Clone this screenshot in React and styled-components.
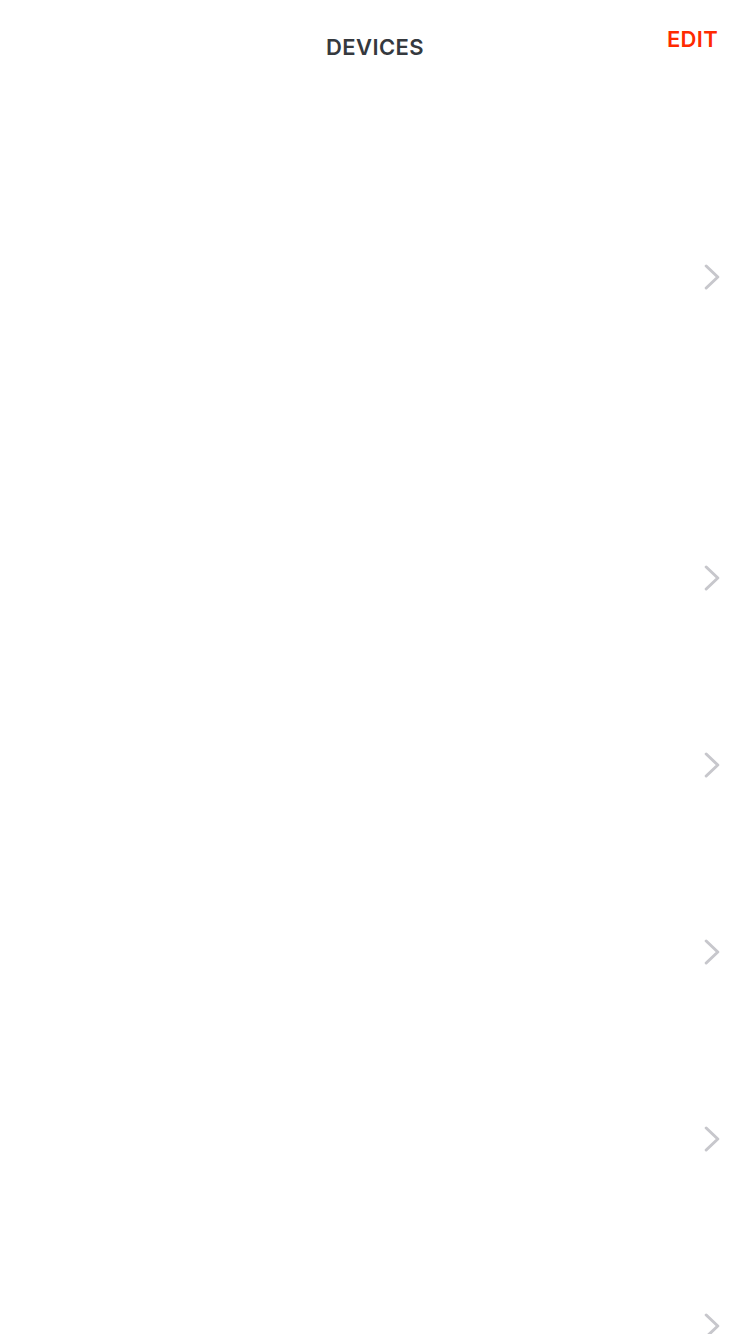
import React from 'react';
import styled, { createGlobalStyle } from 'styled-components';

const GlobalStyle = createGlobalStyle`
  html, body {
    margin: 0;
    padding: 0;
    background: #ffffff;
    font-family: Inter, "Noto Sans", "Liberation Sans", sans-serif;
  }
`;

const Page = styled.div`
  width: 750px;
  height: 1334px;
  overflow: hidden;
  background: #ffffff;
`;

const Header = styled.header`
  display: grid;
  grid-template-columns: 1fr auto 1fr;
  height: 90px;
  padding-top: 28px;
  box-sizing: border-box;
`;

const Title = styled.h1`
  grid-column: 2;
  margin: 8px 0 0;
  font-size: 22px;
  line-height: 22px;
  font-weight: 600;
  letter-spacing: 0.4px;
  color: #35393e;
`;

const EditButton = styled.button`
  grid-column: 3;
  justify-self: end;
  align-self: start;
  margin: 0 32px 0 0;
  padding: 0;
  border: none;
  background: none;
  font-family: inherit;
  font-size: 22px;
  line-height: 22px;
  font-weight: 600;
  letter-spacing: 0.3px;
  color: #ff2a00;
`;

const List = styled.div`
  display: flex;
  flex-direction: column;
`;

const Row = styled.div`
  display: flex;
  align-items: center;
  justify-content: flex-end;
  height: ${p => (p.$tall ? '374px' : '187px')};
  margin-bottom: ${p => (p.$tall ? '20px' : '0')};
  padding-right: 30px;
  flex: none;
`;

const Chevron = () => (
  <svg width="16" height="26" viewBox="0 0 16 26" fill="none">
    <path
      d="M2.2 2 L13.8 13 L2.2 24"
      stroke="#c7c7cc"
      strokeWidth="3"
      strokeLinecap="round"
      strokeLinejoin="round"
    />
  </svg>
);

const devices = [
  { id: 'hub', tall: true },
  { id: 'd1' },
  { id: 'd2' },
  { id: 'd3' },
  { id: 'd4' },
  { id: 'd5' },
];

export default function App() {
  return (
    <Page>
      <GlobalStyle />
      <Header>
        <Title>DEVICES</Title>
        <EditButton>EDIT</EditButton>
      </Header>
      <List>
        {devices.map(d => (
          <Row key={d.id} $tall={d.tall}>
            <Chevron />
          </Row>
        ))}
      </List>
    </Page>
  );
}
